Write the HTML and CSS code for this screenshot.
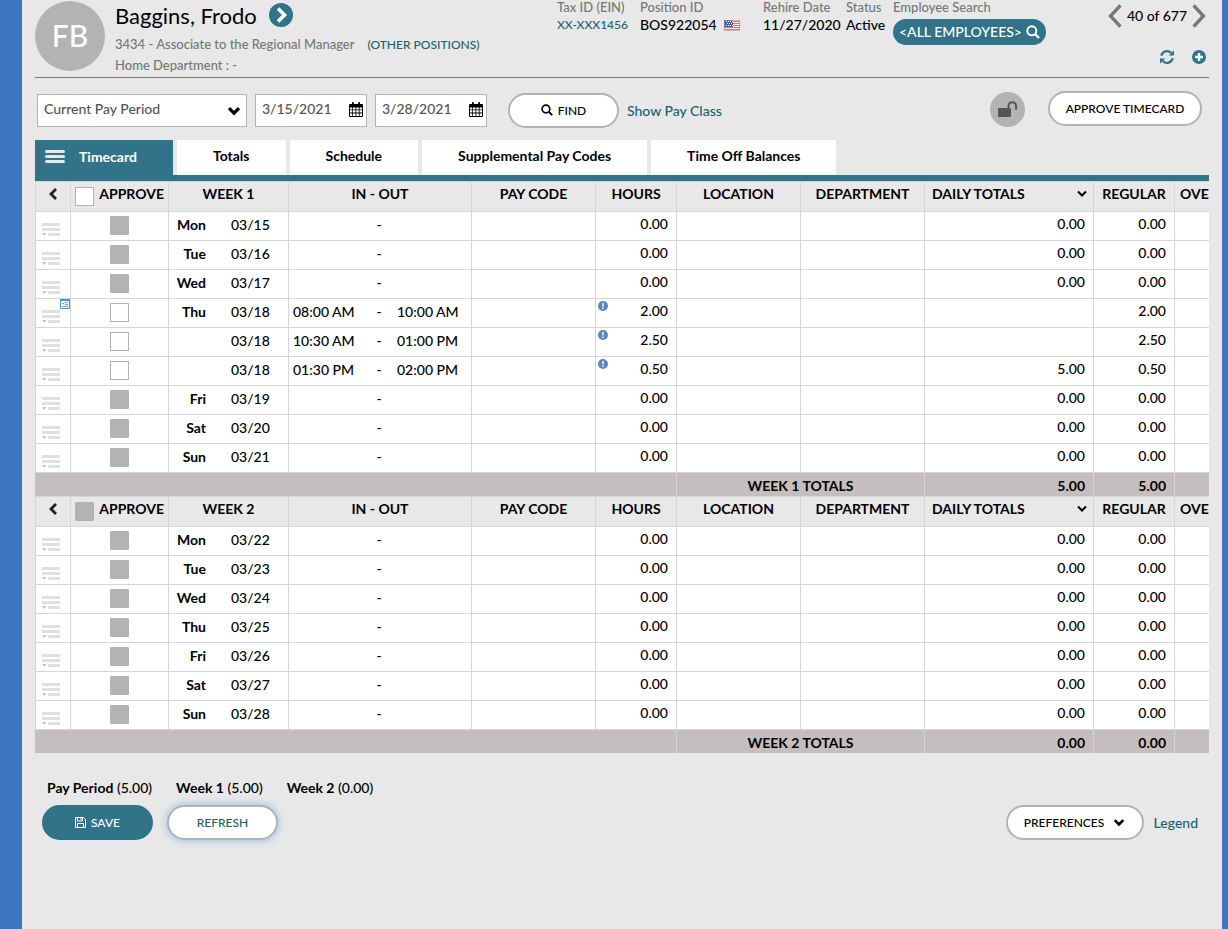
FILE: index.html
```html
<!DOCTYPE html>
<html lang="en">
<head>
  <meta charset="UTF-8">
  <meta name="viewport" content="width=device-width, initial-scale=1.0">
  <title>Timecard</title>
  <link rel="stylesheet" href="styles.css">
</head>
<body>
  <svg class="sprite" aria-hidden="true">
    <symbol id="i-chevron" viewBox="0 0 14 10"><path d="M2 2.2l5 5 5-5" fill="none" stroke="currentColor" stroke-width="3.2"/></symbol>
    <symbol id="i-chevron-thin" viewBox="0 0 12 9"><path d="M2 2.500l4 4 4-4" fill="none" stroke="currentColor" stroke-width="2"/></symbol>
    <symbol id="i-left" viewBox="0 0 10 14"><path d="M8 2L3 7l5 5" fill="none" stroke="currentColor" stroke-width="2.8"/></symbol>
    <symbol id="i-prev" viewBox="0 0 14 24"><path d="M12.4 1.4L2.6 12l9.8 10.6" fill="none" stroke="currentColor" stroke-width="3.4"/></symbol>
    <symbol id="i-next" viewBox="0 0 14 24"><path d="M1.6 1.4L11.4 12 1.6 22.6" fill="none" stroke="currentColor" stroke-width="3.4"/></symbol>
    <symbol id="i-search" viewBox="0 0 14 14"><circle cx="5.8" cy="5.8" r="4.5" fill="none" stroke="currentColor" stroke-width="2"/><path d="M9.2 9.2l3.8 3.8" stroke="currentColor" stroke-width="2.4"/></symbol>
    <symbol id="i-calendar" viewBox="0 0 14 15"><path fill="currentColor" fill-rule="evenodd" d="M1 2h2V.8Q3 0 3.9 0T4.8.8V2h4.4V.8Q9.200 0 10.100 0T11 .8V2h2q1 0 1 1v11q0 1-1 1H1q-1 0-1-1V3q0-1 1-1zM1 5.500v2h2.250v-2zm3 0v2h2.500v-2zm3.300 0v2h2.500v-2zm3.300 0v2H13v-2zM1 8.300v2.300h2.250V8.300zm3 0v2.300h2.500V8.300zm3.300 0v2.300h2.500V8.300zm3.300 0v2.300H13V8.300zM1 11.400V14h2.250v-2.600zm3 0V14h2.500v-2.600zm3.300 0V14h2.500v-2.600zm3.300 0V14H13v-2.600z"/></symbol>
    <symbol id="i-row" viewBox="0 0 19 14"><path d="M0 0h18v3H0zM0 5h18v3H0zM6 10h12v3H6z" fill="#e0e0e0"/><path d="M0 10h4.500L2.250 13z" fill="#c4c4c4"/></symbol>
    <symbol id="i-note" viewBox="0 0 10 10"><path d="M.5.5h9v9h-9z" fill="#eef6fb" stroke="#4a96c4"/><path d="M0 0h10v2H0z" fill="#4a96c4"/><path d="M2 4.500h2M5 3.500h3M5 5.500h3M2 7.500h6" stroke="#9a9a9a"/></symbol>
    <symbol id="i-alert" viewBox="0 0 10 10"><circle cx="5" cy="5" r="5" fill="#5b86bd"/><path d="M5 2v3.500M5 6.600v1.400" stroke="#fff" stroke-width="1.400"/></symbol>
  </svg>

  <main class="page">
    <header class="employee">
      <div class="avatar">FB</div>
      <div class="identity">
        <h1>Baggins, Frodo
          <button class="go" aria-label="Employee details">
            <svg viewBox="0 0 24 24"><circle cx="12" cy="12" r="12" fill="#31748a"/><path d="M9 5.500l6.500 6.500L9 18.500" fill="none" stroke="#fff" stroke-width="3.600"/></svg>
          </button>
        </h1>
        <p>3434 - Associate to the Regional Manager <a href="#">(OTHER POSITIONS)</a></p>
        <p>Home Department : -</p>
      </div>
      <dl class="facts">
        <div class="tax"><dt>Tax ID (EIN)</dt><dd><a href="#">XX-XXX1456</a></dd></div>
        <div class="position">
          <dt>Position ID</dt>
          <dd>BOS922054
            <svg class="flag" viewBox="0 0 16 11"><path d="M0 0h16v11H0z" fill="#fff"/><path d="M0 1.500h16M0 3.500h16M0 5.500h16M0 7.500h16M0 9.500h16" stroke="#e8705f"/><path d="M0 0h9v7H0z" fill="#3c62d0"/><path d="M2 1.500h7M3 3.500h6M2 5.500h7" stroke="#fff" stroke-dasharray="1 1"/><path d="M.5.5h15v10H.5z" fill="none" stroke="#a08c94" stroke-width=".6"/></svg>
          </dd>
        </div>
        <div class="rehire"><dt>Rehire Date</dt><dd>11/27/2020</dd></div>
        <div class="status"><dt>Status</dt><dd>Active</dd></div>
        <div class="search">
          <dt>Employee Search</dt>
          <dd><button class="search-btn">&lt;ALL EMPLOYEES&gt; <svg><use href="#i-search"/></svg></button></dd>
        </div>
      </dl>
      <div class="tools">
        <div class="pager">
          <button aria-label="Previous employee"><svg><use href="#i-prev"/></svg></button>
          <span>40 of 677</span>
          <button aria-label="Next employee"><svg><use href="#i-next"/></svg></button>
        </div>
        <div class="actions">
          <button aria-label="Reload">
            <svg viewBox="0 0 14 14"><path d="M1.300 5.800A5.800 5.800 0 0 1 11.200 3M12.700 8.200A5.800 5.800 0 0 1 2.800 11" fill="none" stroke="#31748a" stroke-width="2.200"/><path d="M14 .3v5.200H8.800zM0 13.700V8.500h5.200z" fill="#31748a"/></svg>
          </button>
          <button aria-label="Add">
            <svg viewBox="0 0 14 14"><circle cx="7" cy="7" r="7" fill="#31748a"/><path d="M7 3v8M3 7h8" stroke="#fff" stroke-width="2.400"/></svg>
          </button>
        </div>
      </div>
    </header>

    <form class="filters">
      <div class="period">
        <select aria-label="Pay period"><option>Current Pay Period</option></select>
        <svg><use href="#i-chevron"/></svg>
      </div>
      <label class="date">
        <input type="text" value="3/15/2021" aria-label="Start date">
        <svg><use href="#i-calendar"/></svg>
      </label>
      <label class="date">
        <input type="text" value="3/28/2021" aria-label="End date">
        <svg><use href="#i-calendar"/></svg>
      </label>
      <button type="button" class="btn find"><svg><use href="#i-search"/></svg> FIND</button>
      <a href="#" class="link">Show Pay Class</a>
      <button type="button" class="lock" aria-label="Unlock timecard">
        <svg viewBox="0 0 20 16"><rect y="7" width="13" height="9" rx="1" fill="#555"/><path d="M10.500 7.500V5a3.800 3.800 0 0 1 7.600 0v3" fill="none" stroke="#555" stroke-width="2" stroke-linecap="round"/></svg>
      </button>
      <button type="button" class="btn approve">APPROVE TIMECARD</button>
    </form>

    <nav class="tabs">
      <button class="tab active"><svg viewBox="0 0 20 13"><path d="M1.500 1.500h17M1.500 6.500h17M1.500 11.500h17" stroke="#e8e8e8" stroke-width="3" stroke-linecap="round"/></svg> Timecard</button>
      <button class="tab">Totals</button>
      <button class="tab">Schedule</button>
      <button class="tab">Supplemental Pay Codes</button>
      <button class="tab">Time Off Balances</button>
    </nav>

    <div class="grid-wrap">
      <table class="grid">
        <colgroup>
          <col class="c-menu"><col class="c-approve"><col class="c-day"><col class="c-inout"><col class="c-code"><col class="c-hours">
          <col class="c-code"><col class="c-code"><col class="c-daily"><col class="c-hours"><col class="c-hours">
        </colgroup>
      </table>
    </div>

    <div class="summary">
      <span><b>Pay Period</b> (5.00)</span>
      <span><b>Week 1</b> (5.00)</span>
      <span><b>Week 2</b> (0.00)</span>
    </div>

    <footer class="footer">
      <button class="btn save">
        <svg viewBox="0 0 11 11"><path d="M.5.5h8l2 2v8H.5zM2.500.5v3.500h5V.5M2.500 10.500v-4h6v4M6 1v2" fill="none" stroke="#fff"/></svg>
        SAVE
      </button>
      <button class="btn refresh">REFRESH</button>
      <button class="btn preferences">PREFERENCES <svg><use href="#i-chevron"/></svg></button>
      <a href="#" class="link">Legend</a>
    </footer>
  </main>

  <script src="timecard.js"></script>
</body>
</html>
```
FILE: styles.css
```css
* {
  box-sizing: border-box;
}

body {
  margin: 0;
  background: #3c76c0;
  color: #000;
  font-family: Lato, "Liberation Sans", sans-serif;
  font-size: 14px;
  font-weight: 500;
}

button, input, select {
  font: inherit;
  color: inherit;
}

button {
  padding: 0;
  border: 0;
  background: none;
  cursor: pointer;
}

a {
  color: #20616d;
  text-decoration: none;
}

svg {
  display: block;
  flex: none;
}

.sprite {
  display: none;
}

.page {
  min-height: 100vh;
  margin: 0 6px 0 22px;
  padding: 0 13px;
  background: #e8e8e8;
}

/* employee header */
.employee {
  display: flex;
  height: 78px;
  padding-right: 3px;
  border-bottom: 1px solid #777;
}

.avatar {
  flex: none;
  width: 70px;
  height: 70px;
  margin-top: 1px;
  border-radius: 50%;
  background: #b3b3b3;
  color: #fff;
  font-size: 30px;
  line-height: 68px;
  text-align: center;
}

.identity {
  margin-left: 10px;
  color: #777;
  white-space: nowrap;
}

.identity h1 {
  display: flex;
  align-items: center;
  gap: 12px;
  height: 30px;
  margin: 0 0 4px;
  color: #000;
  font-size: 22px;
  font-weight: 400;
}

.identity p {
  margin: 0;
  font-size: 13px;
  line-height: 20px;
}

.identity a {
  margin-left: 10px;
  font-size: 12px;
}

.go svg {
  width: 24px;
  height: 24px;
}

.facts {
  display: flex;
  gap: 8px;
  margin: 0 0 0 auto;
  line-height: 18px;
  white-space: nowrap;
}

.facts dt {
  height: 18px;
  margin-top: -2px;
  color: #777;
  font-size: 13px;
}

.facts dd {
  display: flex;
  align-items: center;
  gap: 7px;
  margin: 0;
  font-size: 14px;
}

.facts dd a {
  font-size: 12px;
}

.tax { width: 75px; }
.position { width: 115px; }
.rehire { width: 75px; }
.status { width: 39px; }

.flag {
  width: 16px;
  height: 11px;
}

.search-btn {
  display: flex;
  align-items: center;
  justify-content: space-between;
  width: 153px;
  height: 26px;
  margin-top: 3px;
  padding: 0 6px;
  border-radius: 13px;
  background: #31748a;
  color: #fff;
}

.search-btn svg {
  width: 14px;
  height: 14px;
}

.tools {
  width: 98px;
  margin-left: 62px;
}

.pager {
  display: flex;
  align-items: center;
  justify-content: space-between;
  height: 32px;
  white-space: nowrap;
}

.pager span {
  padding-bottom: 2px;
}

.pager svg {
  width: 14px;
  height: 24px;
  color: #777;
}

.actions {
  display: flex;
  justify-content: flex-end;
  gap: 18px;
  margin-top: 18px;
}

.actions svg {
  width: 14px;
  height: 14px;
}

/* filters */
.filters {
  display: flex;
  align-items: center;
  gap: 8px;
  height: 62px;
  padding: 2px 7px 0 2px;
}

.period {
  position: relative;
}

.period select {
  width: 210px;
  height: 33px;
  padding: 0 6px 4px;
  border: 1px solid #b3b3b3;
  border-radius: 0;
  background: #fff;
  color: #555;
  appearance: none;
}

.period svg {
  position: absolute;
  top: 12px;
  right: 6px;
  width: 14px;
  height: 10px;
  pointer-events: none;
}

.date {
  display: flex;
  align-items: center;
  width: 112px;
  height: 33px;
  padding: 0 3px 2px 6px;
  border: 1px solid #b3b3b3;
  background: #fff;
}

.date input {
  flex: 1;
  min-width: 0;
  padding: 0 0 2px;
  border: 0;
  color: #555;
}

.date svg {
  width: 14px;
  height: 15px;
}

.btn {
  display: flex;
  align-items: center;
  justify-content: center;
  gap: 5px;
  height: 35px;
  border: 2px solid #b3b3b3;
  border-radius: 18px;
  background: #fff;
  font-size: 12px;
}

.find {
  width: 111px;
  margin-left: 13px;
}

.find svg {
  width: 12px;
  height: 12px;
}

.link {
  font-size: 14px;
}

.lock {
  display: grid;
  place-items: center;
  width: 35px;
  height: 35px;
  margin: 0 0 2px auto;
  border-radius: 50%;
  background: #b3b3b3;
}

.lock svg {
  width: 20px;
  height: 16px;
}

.approve {
  width: 154px;
  margin: 0 0 4px 15px;
}

/* tabs */
.tabs {
  display: flex;
  gap: 4px;
  border-bottom: 6px solid #31748a;
}

.tab {
  height: 35px;
  padding: 0 36px 4px;
  background: #fff;
  font-weight: 700;
}

.tab.active {
  display: flex;
  align-items: center;
  gap: 14px;
  padding: 0 36px 2px 10px;
  background: #31748a;
  color: #fff;
}

.tab svg {
  width: 20px;
  height: 13px;
}

/* timecard grid */
.grid-wrap {
  overflow: hidden;
}

.grid {
  width: 1220px;
  border-spacing: 0;
  table-layout: fixed;
  background: #fff;
}

.c-menu { width: 35px; }
.c-approve { width: 98px; }
.c-day { width: 120px; }
.c-inout { width: 183px; }
.c-code { width: 124px; }
.c-hours { width: 81px; }
.c-daily { width: 169px; }

.grid th,
.grid td {
  height: 29px;
  padding: 0 0 2px;
  border-top: 1px solid #d6d6d6;
  border-left: 1px solid #d6d6d6;
  line-height: 16px;
}

.grid .head th {
  height: 30px;
  padding-bottom: 6px;
  background: #e8e8e8;
  font-weight: 700;
}

.collapse svg {
  width: 10px;
  height: 14px;
  margin-top: 4px;
  color: #222;
}

.approve-all,
.daily {
  display: flex;
  align-items: center;
  justify-content: space-between;
  height: 16px;
  padding: 0 4px;
}

.daily {
  padding: 0 5px 0 7px;
}

.daily svg {
  width: 12px;
  height: 9px;
}

.grid .clip {
  padding-left: 5px;
  text-align: left;
}

input[type="checkbox"] {
  display: block;
  width: 19px;
  height: 19px;
  margin: 0 auto;
  border: 1px solid #b3b3b3;
  background: #fff;
  appearance: none;
}

.approve-all input[type="checkbox"] {
  margin: 5px 0 0;
}

input[type="checkbox"]:disabled {
  border-radius: 1px;
  background: #b3b3b3;
}

.grid td.menu {
  padding: 0;
}

.row-menu {
  position: relative;
  display: block;
  width: 34px;
  height: 28px;
}

.row-menu svg {
  width: 19px;
  height: 14px;
  margin: 7px 0 0 6px;
}

.row-menu .note {
  position: absolute;
  top: 0;
  right: 0;
  width: 10px;
  height: 10px;
  margin: 0;
}

.day {
  display: grid;
  grid-template-columns: 37px 1fr;
  gap: 25px;
  text-align: right;
}

.day span {
  text-align: left;
}

.inout {
  display: grid;
  grid-template-columns: 76px 20px 1fr;
  padding-left: 4px;
}

.inout i {
  font-style: normal;
  text-align: center;
}

.inout span:last-child {
  padding-left: 8px;
}

.num {
  position: relative;
  text-align: right;
}

.grid td.num {
  padding: 0 8px 4px 0;
}

.alert {
  position: absolute;
  top: 2px;
  left: 2px;
  width: 10px;
  height: 10px;
}

.grid .totals td {
  height: 24px;
  padding: 3px 0 0;
  background: #c5bebe;
  font-weight: 700;
  text-align: center;
}

.grid .totals td.num {
  padding-right: 8px;
  text-align: right;
}

.grid .totals td:first-child {
  border-left: 0;
}

/* summary and footer */
.summary {
  display: flex;
  gap: 24px;
  margin: 26px 0 8px 12px;
  line-height: 18px;
}

.footer {
  display: flex;
  align-items: center;
  gap: 14px;
  padding: 0 11px 0 7px;
}

.save,
.refresh {
  width: 111px;
}

.save {
  border-color: #31748a;
  background: #31748a;
  color: #fff;
}

.save svg {
  width: 11px;
  height: 11px;
}

.refresh {
  color: #20616d;
  box-shadow: 0 0 8px #8ab8e6;
}

.preferences {
  gap: 9px;
  width: 138px;
  margin-left: auto;
}

.preferences svg {
  width: 12px;
  height: 9px;
}

.footer .link {
  margin-left: -4px;
}
```
FILE: timecard.js
```javascript
const weeks = [
  {
    name: 'Week 1',
    locked: false,
    total: '5.00',
    rows: [
      { day: 'Mon', date: '03/15' },
      { day: 'Tue', date: '03/16' },
      { day: 'Wed', date: '03/17' },
      { day: 'Thu', date: '03/18', start: '08:00 AM', end: '10:00 AM', hours: '2.00', daily: '', note: true },
      { day: '', date: '03/18', start: '10:30 AM', end: '01:00 PM', hours: '2.50', daily: '' },
      { day: '', date: '03/18', start: '01:30 PM', end: '02:00 PM', hours: '0.50', daily: '5.00' },
      { day: 'Fri', date: '03/19' },
      { day: 'Sat', date: '03/20' },
      { day: 'Sun', date: '03/21' }
    ]
  },
  {
    name: 'Week 2',
    locked: true,
    total: '0.00',
    rows: [
      { day: 'Mon', date: '03/22' },
      { day: 'Tue', date: '03/23' },
      { day: 'Wed', date: '03/24' },
      { day: 'Thu', date: '03/25' },
      { day: 'Fri', date: '03/26' },
      { day: 'Sat', date: '03/27' },
      { day: 'Sun', date: '03/28' }
    ]
  }
];

function headRow(week) {
  return `<tr class="head">
    <th><button class="collapse" aria-label="Collapse"><svg><use href="#i-left"/></svg></button></th>
    <th><label class="approve-all"><input type="checkbox" ${week.locked ? 'disabled' : ''}> APPROVE</label></th>
    <th>${week.name.toUpperCase()}</th>
    <th>IN - OUT</th>
    <th>PAY CODE</th>
    <th>HOURS</th>
    <th>LOCATION</th>
    <th>DEPARTMENT</th>
    <th><div class="daily">DAILY TOTALS <svg><use href="#i-chevron-thin"/></svg></div></th>
    <th>REGULAR</th>
    <th class="clip">OVERTIME</th>
  </tr>`;
}

function dayRow(row) {
  const { start = '', end = '', hours = '0.00', daily = '0.00' } = row;
  return `<tr>
    <td class="menu"><button class="row-menu" aria-label="Row actions"><svg><use href="#i-row"/></svg>${row.note ? '<svg class="note"><use href="#i-note"/></svg>' : ''}</button></td>
    <td><input type="checkbox" aria-label="Approve ${row.date}" ${start ? '' : 'disabled'}></td>
    <td><div class="day"><b>${row.day}</b><span>${row.date}</span></div></td>
    <td><div class="inout"><span>${start}</span><i>-</i><span>${end}</span></div></td>
    <td></td>
    <td class="num">${start ? '<svg class="alert"><use href="#i-alert"/></svg>' : ''}${hours}</td>
    <td></td>
    <td></td>
    <td class="num">${daily}</td>
    <td class="num">${hours}</td>
    <td></td>
  </tr>`;
}

function totalRow(week) {
  return `<tr class="totals">
    <td colspan="6"></td>
    <td colspan="2">${week.name.toUpperCase()} TOTALS</td>
    <td class="num">${week.total}</td>
    <td class="num">${week.total}</td>
    <td></td>
  </tr>`;
}

const grid = document.querySelector('.grid');
weeks.forEach(week => {
  const body = document.createElement('tbody');
  body.innerHTML = headRow(week) + week.rows.map(dayRow).join('') + totalRow(week);
  grid.appendChild(body);
});
```
